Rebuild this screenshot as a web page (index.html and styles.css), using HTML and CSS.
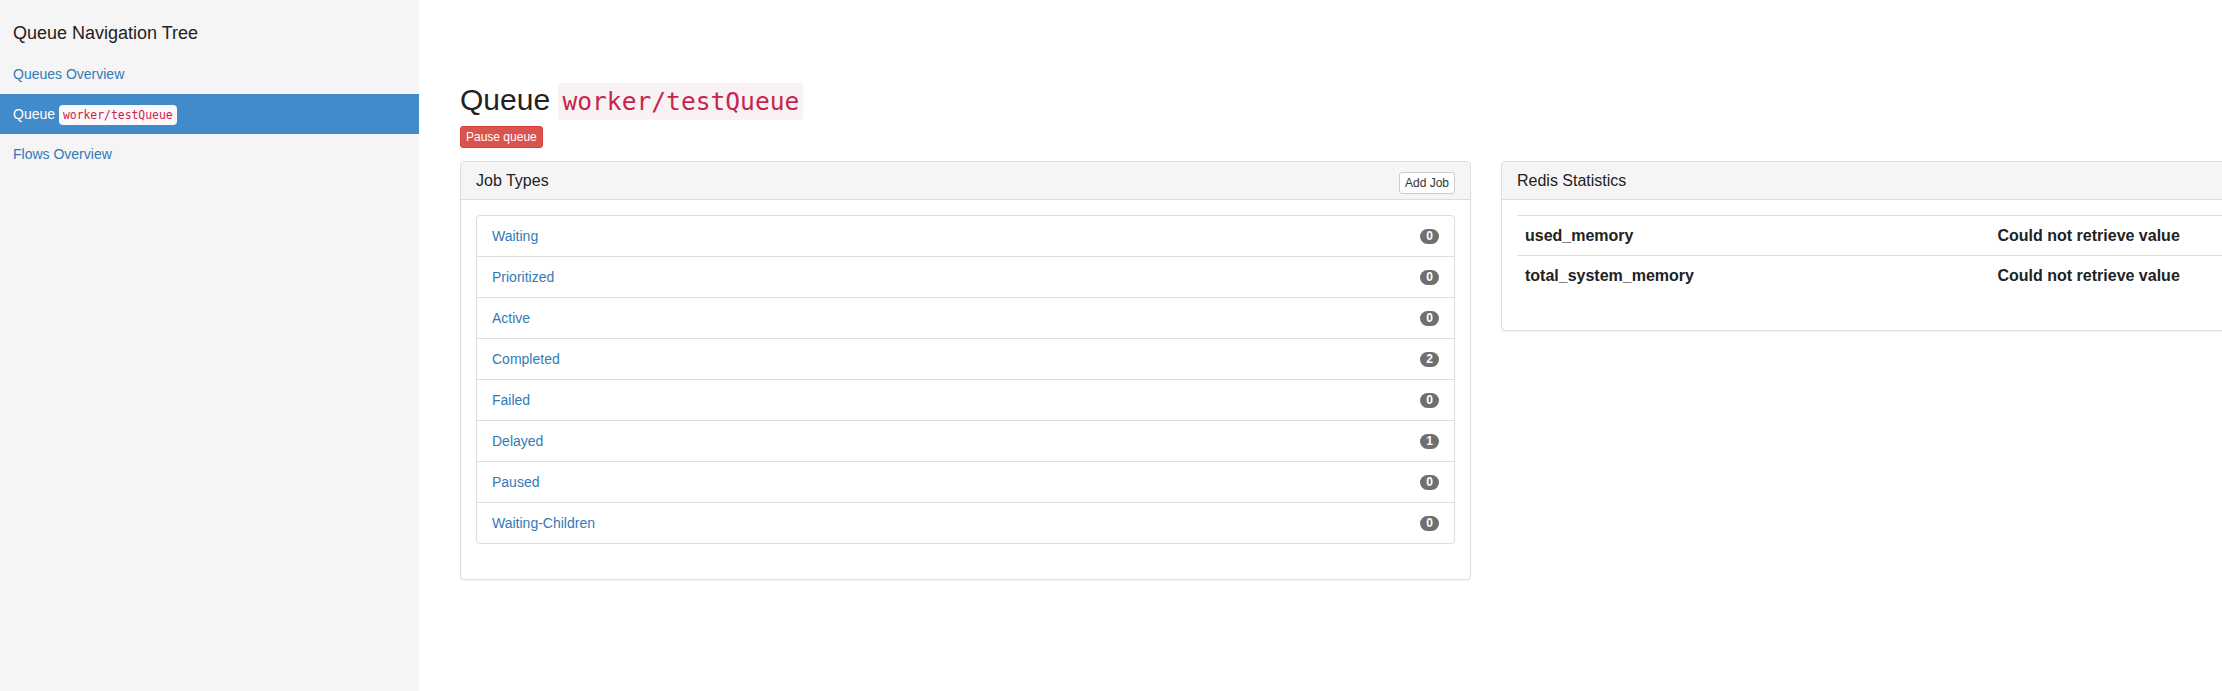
FILE: index.html
```html
<!DOCTYPE html>
<html lang="en">
<head>
<meta charset="utf-8">
<title>Queue worker/testQueue</title>
<link rel="stylesheet" href="styles.css">
</head>
<body>
<aside class="sidebar">
  <div class="sidebar-title">Queue Navigation Tree</div>
  <ul class="nav">
    <li><a class="nav-link" href="#">Queues Overview</a></li>
    <li><a class="nav-link active" href="#">Queue <code class="code-sm">worker/testQueue</code></a></li>
    <li><a class="nav-link" href="#">Flows Overview</a></li>
  </ul>
</aside>
<main class="main">
  <h2 class="page-title">Queue <code class="code-lg">worker/testQueue</code></h2>
  <div class="actions"><button class="btn btn-danger">Pause queue</button></div>
  <div class="panels">
    <section class="panel">
      <div class="panel-heading">
        <span class="panel-title">Job Types</span>
        <button class="btn btn-default">Add Job</button>
      </div>
      <div class="panel-body">
        <ul class="list-group">
          <li class="list-group-item"><a href="#">Waiting</a><span class="badge">0</span></li>
          <li class="list-group-item"><a href="#">Prioritized</a><span class="badge">0</span></li>
          <li class="list-group-item"><a href="#">Active</a><span class="badge">0</span></li>
          <li class="list-group-item"><a href="#">Completed</a><span class="badge">2</span></li>
          <li class="list-group-item"><a href="#">Failed</a><span class="badge">0</span></li>
          <li class="list-group-item"><a href="#">Delayed</a><span class="badge">1</span></li>
          <li class="list-group-item"><a href="#">Paused</a><span class="badge">0</span></li>
          <li class="list-group-item"><a href="#">Waiting-Children</a><span class="badge">0</span></li>
        </ul>
      </div>
    </section>
    <section class="panel">
      <div class="panel-heading">
        <span class="panel-title">Redis Statistics</span>
      </div>
      <div class="panel-body">
        <table class="stats">
          <tbody>
            <tr><td>used_memory</td><td>Could not retrieve value</td></tr>
            <tr><td>total_system_memory</td><td>Could not retrieve value</td></tr>
          </tbody>
        </table>
      </div>
    </section>
  </div>
</main>
</body>
</html>
```
FILE: styles.css
```css
html, body {
  margin: 0;
  padding: 0;
}
body {
  display: flex;
  align-items: stretch;
  min-height: 100vh;
  overflow: hidden;
  font-family: "Liberation Sans", Arial, sans-serif;
  font-size: 14px;
  line-height: 20px;
  color: #333;
  background: #fff;
}
a {
  color: #337ab7;
  text-decoration: none;
}

/* Sidebar */
.sidebar {
  flex: none;
  width: 419px;
  min-height: 100vh;
  background: #f5f5f5;
}
.sidebar-title {
  padding: 23px 13px 11px;
  font-size: 18px;
  line-height: 20px;
  color: #222;
}
.nav {
  list-style: none;
  margin: 0;
  padding: 0;
}
.nav-link {
  display: block;
  padding: 10px 13px;
  line-height: 20px;
  font-size: 14px;
  color: #337ab7;
}
.nav-link.active {
  background: #428bca;
  color: #fff;
}
.code-sm {
  font-family: "DejaVu Sans Mono", "Liberation Mono", monospace;
  font-size: 11.4px;
  line-height: 10px;
  padding: 3px 4px;
  color: #c7254e;
  background: #fdf8fa;
  border-radius: 4px;
}

/* Main */
.main {
  flex: none;
  padding: 83px 0 0 41px;
}
.page-title {
  margin: 0;
  font-size: 30px;
  line-height: 33px;
  font-weight: normal;
  color: #222;
}
.code-lg {
  font-family: "DejaVu Sans Mono", "Liberation Mono", monospace;
  font-size: 24.6px;
  line-height: 20px;
  padding: 4px 4px;
  color: #c7254e;
  background: #f9f2f4;
  border-radius: 4px;
}
.actions {
  display: flex;
  margin: 10px 0 13px;
}
.btn {
  font-family: "Liberation Sans", Arial, sans-serif;
  font-size: 12px;
  line-height: 18px;
  padding: 1px 5px;
  border: 1px solid transparent;
  border-radius: 3px;
  cursor: pointer;
}
.btn-danger {
  background: #d9534f;
  border-color: #d43f3a;
  color: #fff;
}
.btn-default {
  background: #fff;
  border-color: #ccc;
  color: #333;
}

/* Panels */
.panels {
  display: flex;
  align-items: flex-start;
  gap: 30px;
}
.panel {
  flex: none;
  width: 1011px;
  box-sizing: border-box;
  background: #fff;
  border: 1px solid #ddd;
  border-radius: 4px;
  box-shadow: 0 1px 1px rgba(0, 0, 0, 0.05);
}
.panel-heading {
  display: flex;
  justify-content: space-between;
  align-items: flex-start;
  box-sizing: border-box;
  height: 38px;
  padding: 10px 15px;
  background: #f5f5f5;
  border-bottom: 1px solid #ddd;
  border-radius: 3px 3px 0 0;
}
.panel-title {
  font-size: 16px;
  line-height: 17.6px;
  color: #222;
}
.panel-body {
  padding: 15px;
}
.list-group {
  list-style: none;
  margin: 0 0 20px;
  padding: 0;
}
.list-group-item {
  display: flex;
  justify-content: space-between;
  align-items: center;
  padding: 10px 15px;
  border: 1px solid #ddd;
  margin-bottom: -1px;
  line-height: 20px;
}
.list-group-item:first-child {
  border-radius: 4px 4px 0 0;
}
.list-group-item:last-child {
  margin-bottom: 0;
  border-radius: 0 0 4px 4px;
}
.badge {
  display: inline-block;
  font-size: 12px;
  font-weight: bold;
  line-height: 11px;
  padding: 2px 6px;
  color: #fff;
  background: #6f6f6f;
  border-radius: 10px;
}

/* Stats table */
.stats {
  width: 100%;
  border-collapse: collapse;
  margin-bottom: 20px;
}
.stats td {
  padding: 8px;
  font-size: 16px;
  line-height: 23px;
  font-weight: bold;
  color: #222;
  border-top: 1px solid #ddd;
  text-align: left;
  vertical-align: top;
}
```
